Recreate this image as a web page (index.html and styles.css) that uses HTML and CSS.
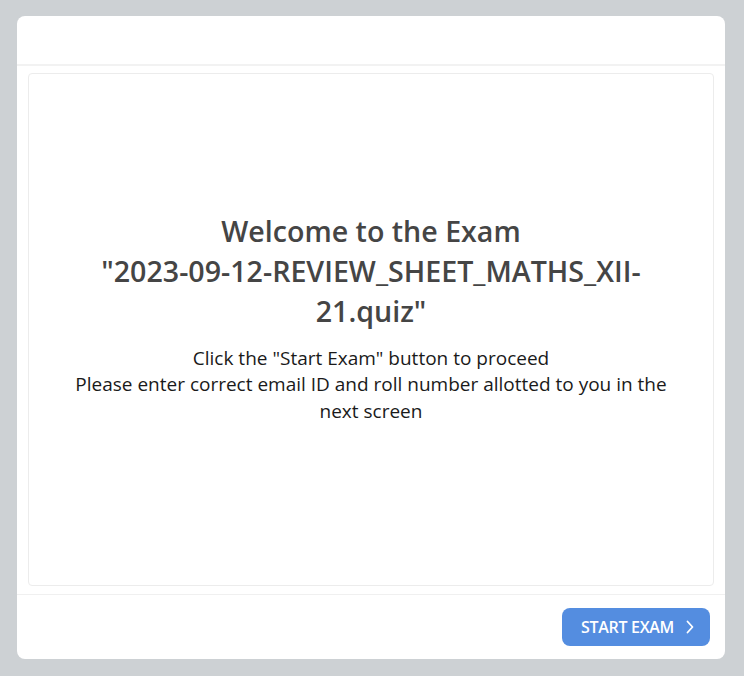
FILE: index.html
```html
<!DOCTYPE html>
<html>
<head>
<meta charset="utf-8">
<link rel="stylesheet" href="styles.css">
</head>
<body>
<div class="card">
  <div class="card-header"></div>
  <div class="card-body">
    <div class="panel">
      <h1 class="title">Welcome to the Exam<br>"2023-09-12-REVIEW_SHEET_MATHS_XII-21.quiz"</h1>
      <p class="info">Click the "Start Exam" button to proceed<br>Please enter correct email ID and roll number allotted to you in the next screen</p>
    </div>
  </div>
  <div class="card-footer">
    <button class="start-btn">START EXAM
      <svg class="chev" width="10" height="14" viewBox="0 0 10 14"><path d="M2.5 1.5 L7.5 7 L2.5 12.5" fill="none" stroke="#fff" stroke-width="1.8" stroke-linecap="round" stroke-linejoin="round"/></svg>
    </button>
  </div>
</div>
</body>
</html>
```

FILE: styles.css
```css
html, body {
  margin: 0;
  padding: 0;
  background: #cdd1d4;
}
body {
  padding: 16px 19px 17px 17px;
  font-family: "Open Sans", sans-serif;
}
.card {
  width: 708px;
  height: 643px;
  background: #fff;
  border-radius: 8px;
  display: flex;
  flex-direction: column;
  box-sizing: border-box;
}
.card-header {
  height: 48px;
  border-bottom: 2px solid #f2f2f2;
  flex: none;
}
.card-body {
  flex: 1;
  padding: 7px 11px 8px 11px;
  display: flex;
  border-bottom: 1px solid #f0f0f0;
}
.panel {
  flex: 1;
  border: 1px solid #ececec;
  border-radius: 4px;
  display: flex;
  flex-direction: column;
  justify-content: center;
  align-items: center;
  text-align: center;
  padding: 0 30px 24px;
}
.title {
  margin: 0;
  font-size: 28.6px;
  font-weight: 600;
  line-height: 40px;
  color: #454545;
  max-width: 580px;
}
.info {
  margin: 14px 0 0;
  font-size: 19px;
  line-height: 26.5px;
  color: #1a1a1a;
  max-width: 610px;
}
.card-footer {
  height: 64px;
  flex: none;
  display: flex;
  justify-content: flex-end;
  align-items: center;
  padding-right: 15px;
}
.start-btn {
  width: 148px;
  height: 38px;
  border: none;
  border-radius: 8px;
  background: #548de0;
  color: #fff;
  font-family: "Open Sans", sans-serif;
  font-weight: 600;
  font-size: 16px;
  letter-spacing: -0.3px;
  display: flex;
  align-items: center;
  padding: 0 0 0 19px;
  gap: 11px;
}
.chev {
  display: block;
}
```
